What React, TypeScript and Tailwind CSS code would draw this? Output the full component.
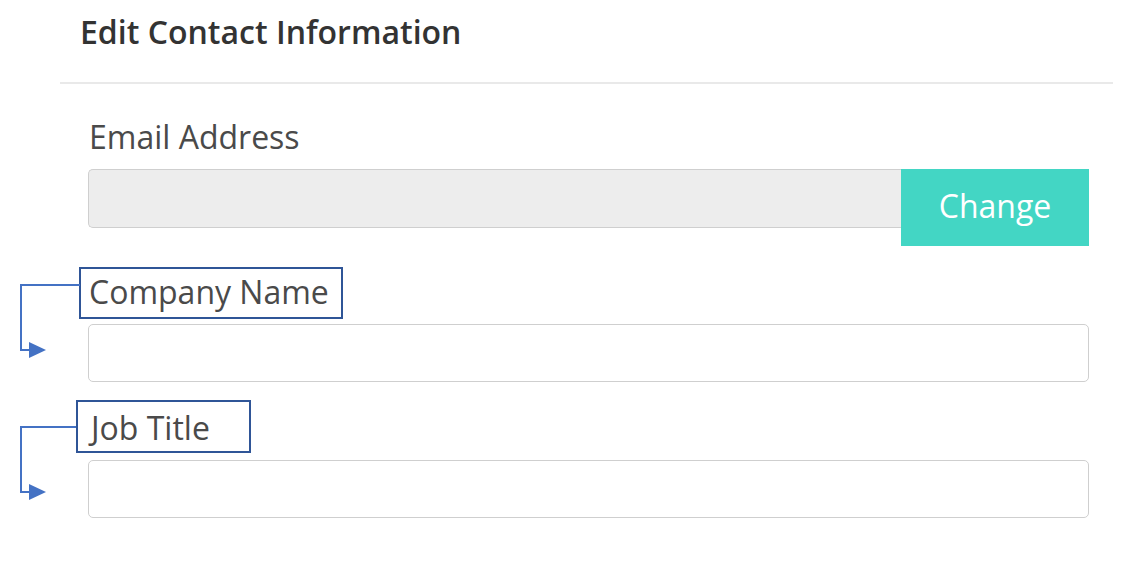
export default function App() {
  return (
    <div className="relative w-[1133px] h-[564px] bg-white font-['Open_Sans','Liberation_Sans',sans-serif]">
      <div className="h-[82px] pl-[80px] pt-[12px]">
        <h1 className="text-[32px] leading-[40px] font-semibold text-[#333333]">Edit Contact Information</h1>
      </div>

      <div className="ml-[60px] mr-[20px] h-[2px] bg-[#e9e9e9]" />

      <form className="pl-[88px] pr-[44px] pt-[33px] text-[#4a4a4a]">
        <label className="block text-[32px] leading-[40px] pl-[1px]">Email Address</label>
        <div className="mt-[12px] flex items-start">
          <input
            disabled
            className="h-[59px] flex-1 rounded-l-[5px] border border-r-0 border-[#cfcfcf] bg-[#ededed]"
          />
          <button
            type="button"
            className="h-[77px] w-[188px] bg-[#43d6c4] pb-[4px] text-[32px] text-white"
          >
            Change
          </button>
        </div>

        <div className="mt-[26px]">
          <span className="relative inline-block text-[32px] leading-[40px] pl-[1px]">
            Company Name
            <span className="absolute -left-[9px] -right-[14px] -top-[5px] -bottom-[7px] border-2 border-[#2f5597]" />
          </span>
          <input className="mt-[12px] block h-[58px] w-full rounded-[5px] border border-[#cfcfcf] bg-white" />
        </div>

        <div className="mt-[26px]">
          <span className="relative inline-block text-[32px] leading-[40px] pl-[3px]">
            Job Title
            <span className="absolute -left-[12px] -right-[41px] -top-[8px] -bottom-[5px] border-2 border-[#2f5597]" />
          </span>
          <input className="mt-[12px] block h-[58px] w-full rounded-[5px] border border-[#cfcfcf] bg-white" />
        </div>
      </form>

      <svg className="pointer-events-none absolute left-0 top-0" width="90" height="564">
        <g fill="none" stroke="#4472c4" strokeWidth="2">
          <path d="M80 285 H21 V350 H30" />
          <path d="M76 427 H21 V492 H30" />
        </g>
        <g fill="#4472c4">
          <path d="M29 342 L46 350 L29 358 Z" />
          <path d="M29 484 L46 492 L29 500 Z" />
        </g>
      </svg>
    </div>
  )
}
